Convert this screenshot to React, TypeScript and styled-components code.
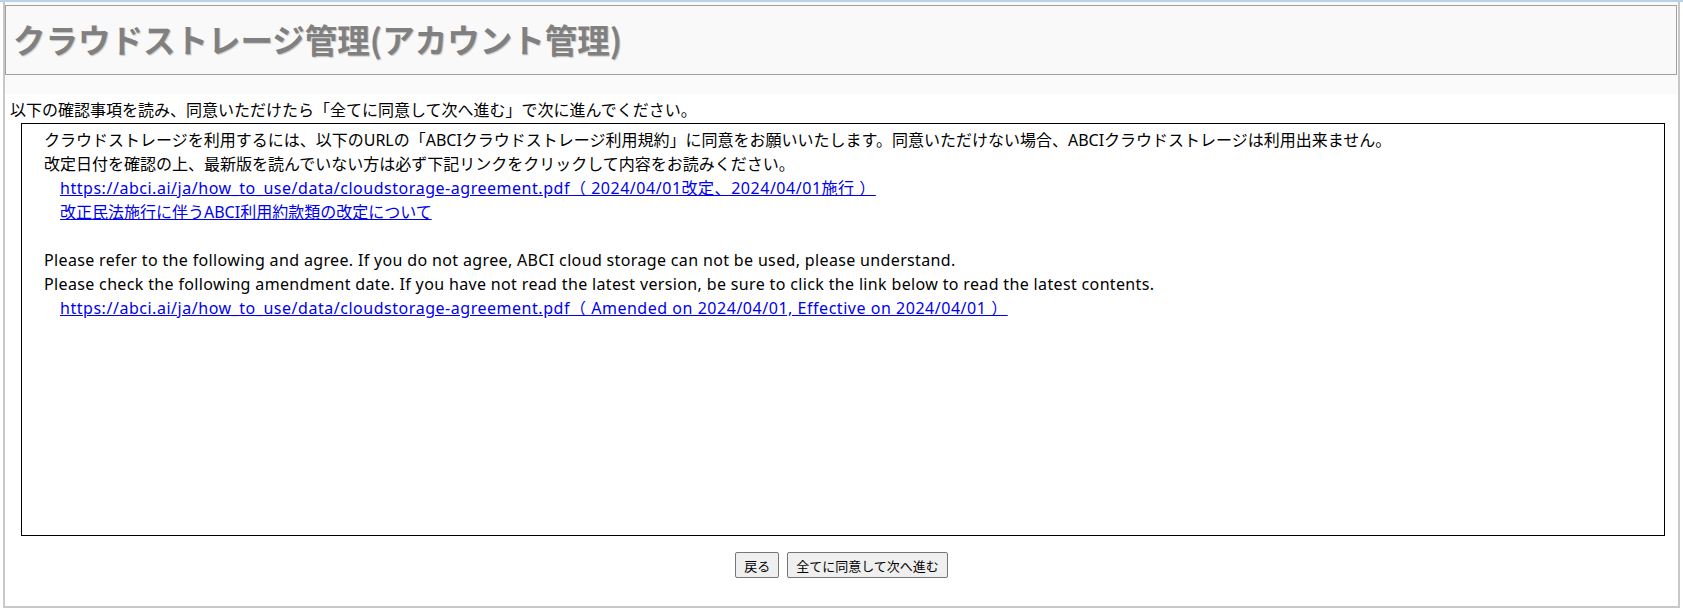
import React from 'react'
import styled, { createGlobalStyle } from 'styled-components'

const GlobalStyle = createGlobalStyle`
  body {
    margin: 0;
    background: #ffffff;
    font-family: "Noto Sans", "Noto Sans CJK JP", sans-serif;
    color: #000;
  }
`

const TopLine = styled.div`
  height: 2px;
  background: #b5d3ea;
`

const Frame = styled.div`
  margin-left: 3px;
  width: 1677px;
  height: 606px;
  box-sizing: border-box;
  border: 2px solid #c8c8c8;
  border-top: none;
  display: flex;
  flex-direction: column;
`

const HeaderArea = styled.header`
  background: #fafafa;
  padding: 3px 1px 19px 0;
`

const TitleBox = styled.div`
  height: 70px;
  box-sizing: border-box;
  border: 1px solid #a0a0a0;
  background: #f9f9f9;
  display: flex;
  align-items: center;
  padding: 0 7px 4px;
`

const Title = styled.h1`
  margin: 0;
  font-family: "Noto Sans CJK JP", sans-serif;
  font-size: 32.5px;
  font-weight: bold;
  color: #808080;
  text-shadow: 1px 1px 1px #c4c4c4;
`

const Lead = styled.p`
  margin: 0;
  padding: 4px 5px 0;
  font-size: 16px;
  line-height: 24px;
`

const NoticeBox = styled.div`
  margin: 1px 13px 0 16px;
  height: 413px;
  box-sizing: border-box;
  border: 1px solid #000;
  padding: 4px 22px;
  font-size: 16px;
  line-height: 24px;
`

const Line = styled.div<{ $indent?: boolean; $en?: boolean }>`
  min-height: 24px;
  padding-left: ${(p) => (p.$indent ? '16px' : '0')};
  letter-spacing: ${(p) => (p.$en ? '0.35px' : 'normal')};
  white-space: nowrap;
`

const DocLink = styled.a<{ $url?: boolean }>`
  color: #0000ee;
  text-decoration: underline;
  letter-spacing: ${(p) => (p.$url ? '0.53px' : 'normal')};
`

const Actions = styled.div`
  display: flex;
  justify-content: center;
  gap: 8px;
  padding-top: 16px;
`

const Button = styled.button`
  font-family: "Noto Sans CJK JP", sans-serif;
  font-size: 13px;
  height: 26px;
  padding: 0 8px;
  background: #efefef;
  border: 1px solid #767676;
  border-radius: 2px;
  color: #000;
`

const PDF = 'https://abci.ai/ja/how_to_use/data/cloudstorage-agreement.pdf'

export default function App() {
  return (
    <>
      <GlobalStyle />
      <TopLine />
      <Frame>
        <HeaderArea>
          <TitleBox>
            <Title>クラウドストレージ管理(アカウント管理)</Title>
          </TitleBox>
        </HeaderArea>
        <Lead>以下の確認事項を読み、同意いただけたら「全てに同意して次へ進む」で次に進んでください。</Lead>
        <NoticeBox>
          <Line>
            クラウドストレージを利用するには、以下のURLの「ABCIクラウドストレージ利用規約」に同意をお願いいたします。同意いただけない場合、ABCIクラウドストレージは利用出来ません。
          </Line>
          <Line>改定日付を確認の上、最新版を読んでいない方は必ず下記リンクをクリックして内容をお読みください。</Line>
          <Line $indent>
            <DocLink href="#" $url>{PDF}（ 2024/04/01改定、2024/04/01施行 ）</DocLink>
          </Line>
          <Line $indent>
            <DocLink href="#">改正民法施行に伴うABCI利用約款類の改定について</DocLink>
          </Line>
          <Line />
          <Line $en>
            Please refer to the following and agree. If you do not agree, ABCI cloud storage can not be used, please understand.
          </Line>
          <Line $en>
            Please check the following amendment date. If you have not read the latest version, be sure to click the link below to read the latest contents.
          </Line>
          <Line $indent>
            <DocLink href="#" $url>{PDF}（ Amended on 2024/04/01, Effective on 2024/04/01 ）</DocLink>
          </Line>
        </NoticeBox>
        <Actions>
          <Button>戻る</Button>
          <Button>全てに同意して次へ進む</Button>
        </Actions>
      </Frame>
    </>
  )
}
